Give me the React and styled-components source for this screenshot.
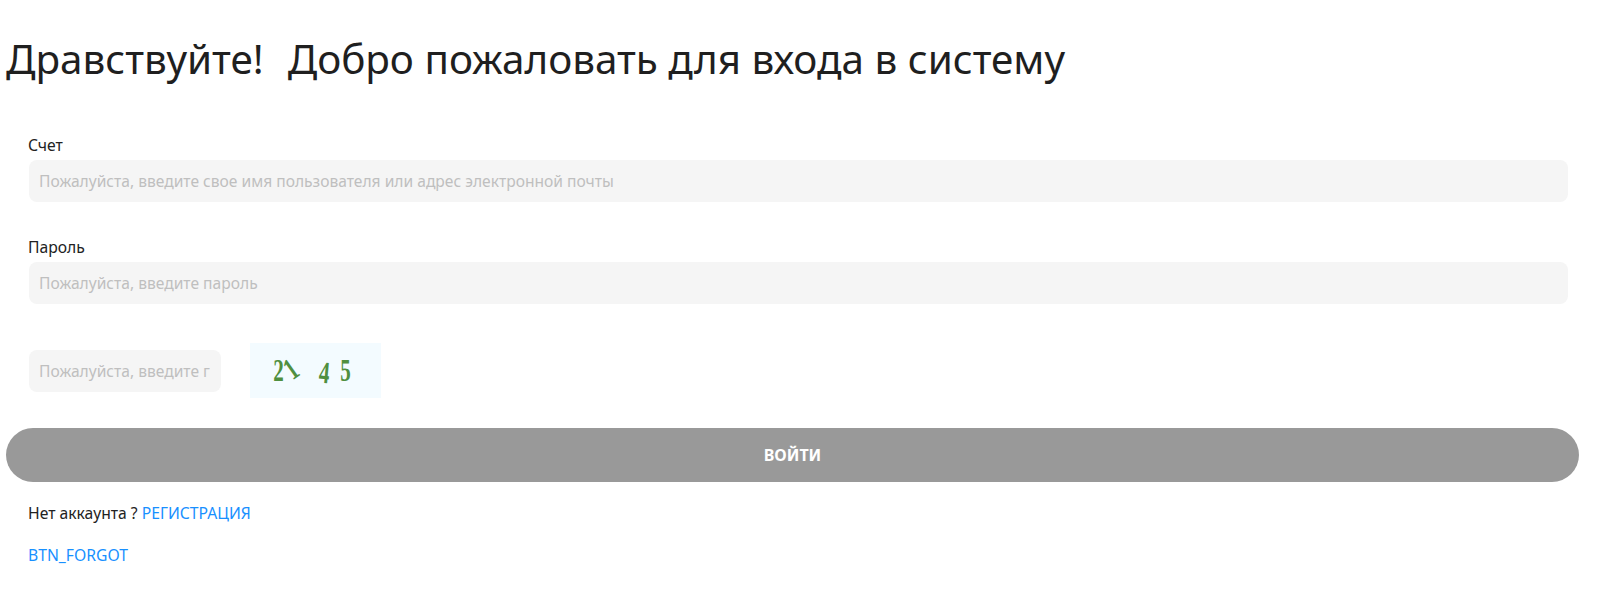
import React from "react";
import styled, { createGlobalStyle } from "styled-components";

const Global = createGlobalStyle`
  html, body { margin: 0; padding: 0; background: #fff; }
  body { font-family: "Noto Sans", "Open Sans", sans-serif; color: #1f1f1f; }
  input::placeholder { color: #bfbfbf; opacity: 1; }
`;

const Page = styled.div`
  padding: 0 21px 0 6px;
  height: 603px;
  box-sizing: border-box;
  overflow: hidden;
`;
const Title = styled.h1`
  margin: 0;
  padding-top: 31px;
  height: 85px;
  font-size: 40.44px;
  line-height: 56px;
  font-weight: 400;
  white-space: pre;
`;
const Greeting = styled.span`
  margin-right: 3px;
`;
const Form = styled.form`
  display: flex;
  flex-direction: column;
  padding-top: 18px;
`;
const Field = styled.div`
  display: flex;
  flex-direction: column;
  padding: 0 11px 0 23px;
  margin-bottom: ${(p) => p.$gap}px;
`;
const Label = styled.label`
  font-size: 15.7px;
  line-height: 22px;
  height: 26px;
  margin-left: -1px;
  color: #222;
`;
const Input = styled.input`
  box-sizing: border-box;
  width: ${(p) => p.$width || "100%"};
  height: 42px;
  border: none;
  outline: none;
  border-radius: 8px;
  background: #f5f5f5;
  padding: 0 11px 0 10px;
  font: inherit;
  font-size: 15.6px;
`;
const CaptchaRow = styled.div`
  display: flex;
  align-items: center;
  gap: 29px;
  padding-left: 23px;
  margin-bottom: 30px;
`;
const Captcha = styled.div`
  width: 131px;
  height: 55px;
  background: #f3fbff;
  display: flex;
  align-items: center;
  padding-left: 21px;
  box-sizing: border-box;
`;
const Digit = styled.span`
  font-family: "Liberation Serif", serif;
  font-weight: 700;
  font-size: 31px;
  line-height: 1;
  color: #4f8f3f;
  display: inline-block;
  width: ${(p) => p.$w}px;
  margin-left: ${(p) => p.$ml || 0}px;
  transform: ${(p) => `rotate(${p.$rot || 0}deg) translateY(${p.$y || 0}px) scaleX(.68)`};
  transform-origin: center;
`;
const Submit = styled.button`
  display: block;
  width: 100%;
  height: 54px;
  border: none;
  border-radius: 27px;
  background: #999;
  color: #fff;
  font: inherit;
  font-weight: 700;
  font-size: 16px;
`;
const Line = styled.p`
  margin: 0;
  padding-left: 22px;
  font-size: 15.7px;
  line-height: 20px;
  color: #222;
  margin-top: ${(p) => p.$mt}px;
`;
const Anchor = styled.a`
  color: #1890ff;
  text-decoration: none;
`;

export default function App() {
  return (
    <Page>
      <Global />
      <Title><Greeting>Дравствуйте!</Greeting>{"  Добро пожаловать для входа в систему"}</Title>
      <Form onSubmit={(e) => e.preventDefault()}>
        <Field $gap={34}>
          <Label>Счет</Label>
          <Input placeholder="Пожалуйста, введите свое имя пользователя или адрес электронной почты" />
        </Field>
        <Field $gap={39}>
          <Label>Пароль</Label>
          <Input placeholder="Пожалуйста, введите пароль" />
        </Field>
        <CaptchaRow>
          <Input $width="192px" placeholder="Пожалуйста, введите графический код" />
          <Captcha>
            <Digit $w={14}>2</Digit>
            <Digit $w={16} $rot={-35} $ml={-1} $y={-2}>1</Digit>
            <Digit $w={14} $ml={17} $y={2} $rot={5}>4</Digit>
            <Digit $w={14} $ml={7}>5</Digit>
          </Captcha>
        </CaptchaRow>
        <Submit>ВОЙТИ</Submit>
        <Line $mt={21}>Нет аккаунта ? <Anchor href="#">РЕГИСТРАЦИЯ</Anchor></Line>
        <Line $mt={22}><Anchor href="#">BTN_FORGOT</Anchor></Line>
      </Form>
    </Page>
  );
}
